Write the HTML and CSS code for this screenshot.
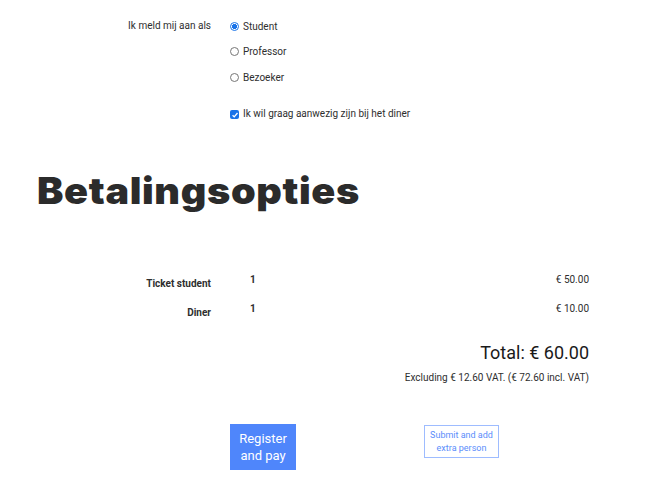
FILE: index.html
```html
<!DOCTYPE html>
<html lang="nl">
<head>
<meta charset="utf-8">
<link rel="stylesheet" href="styles.css">
</head>
<body>
<div class="page">
  <div class="form-row">
    <div class="label">Ik meld mij aan als</div>
    <div class="options">
      <label class="opt"><span class="radio checked"></span>Student</label>
      <label class="opt"><span class="radio"></span>Professor</label>
      <label class="opt"><span class="radio"></span>Bezoeker</label>
      <label class="opt check-opt"><span class="checkbox"><svg viewBox="0 0 8 8" width="8" height="8"><path d="M1.6 4.3 L3.2 5.9 L6.5 2" fill="none" stroke="#fff" stroke-width="1.3"/></svg></span>Ik wil graag aanwezig zijn bij het diner</label>
    </div>
  </div>

  <h1 class="title">Betalingsopties</h1>

  <div class="items">
    <div class="item">
      <div class="item-name">Ticket student</div>
      <div class="item-qty">1</div>
      <div class="item-price">€ 50.00</div>
    </div>
    <div class="item">
      <div class="item-name">Diner</div>
      <div class="item-qty">1</div>
      <div class="item-price">€ 10.00</div>
    </div>
  </div>

  <div class="summary">
    <div class="total">Total: € 60.00</div>
    <div class="vat">Excluding € 12.60 VAT. (€ 72.60 incl. VAT)</div>
  </div>

  <div class="actions">
    <button class="btn-primary">Register<br>and pay</button>
    <button class="btn-secondary">Submit and add<br>extra person</button>
  </div>
</div>
</body>
</html>
```
FILE: styles.css
```css
* { box-sizing: border-box; }
html, body { margin: 0; padding: 0; background: #fff; }
body {
  font-family: Roboto, "Liberation Sans", Arial, sans-serif;
  font-size: 10px;
  color: #2e2e2e;
}
.page {
  width: 670px;
  padding: 19px 81px 0 37px;
}
.form-row {
  display: grid;
  grid-template-columns: 174px 1fr;
  column-gap: 19px;
}
.label {
  text-align: right;
  line-height: 14px;
}
.options {
  display: flex;
  flex-direction: column;
}
.opt {
  display: flex;
  align-items: center;
  height: 14px;
  margin-bottom: 11.5px;
  gap: 4px;
}
.check-opt {
  margin-top: 10.5px;
  margin-bottom: 0;
}
.radio {
  width: 9px;
  height: 9px;
  border: 1px solid #767676;
  border-radius: 50%;
  display: inline-block;
  flex: none;
}
.radio.checked {
  border-color: #1a73e8;
  background: radial-gradient(circle, #1a73e8 0 2.3px, #fff 2.6px);
}
.checkbox {
  width: 9px;
  height: 9px;
  background: #1a73e8;
  border-radius: 2px;
  margin-top: 3px;
  display: inline-flex;
  align-items: center;
  justify-content: center;
  flex: none;
}
.checkbox svg { display: block; }
.title {
  font-family: Inter, "DejaVu Sans", sans-serif;
  font-weight: 900;
  font-size: 37px;
  letter-spacing: 0.6px;
  line-height: 36px;
  margin: 53px 0 0 0;
  color: #2b2b2b;
  transform: scaleX(1.07);
  transform-origin: left center;
}
.items {
  margin-top: 64px;
}
.item {
  display: grid;
  grid-template-columns: 174px auto 1fr;
  column-gap: 39px;
  height: 29px;
}
.item-name {
  text-align: right;
  font-weight: 700;
  padding-top: 4px;
  line-height: 14px;
}
.item-qty {
  font-weight: 700;
  line-height: 14px;
}
.item-price {
  text-align: right;
  line-height: 14px;
}
.summary {
  text-align: right;
  margin-top: 10px;
}
.total {
  font-size: 18px;
  font-weight: 400;
  line-height: 24px;
  color: #1a1a1a;
}
.vat {
  font-size: 10px;
  line-height: 14px;
  margin-top: 6px;
}
.actions {
  display: flex;
  align-items: flex-start;
  margin-top: 39px;
  padding-left: 193px;
}
.btn-primary {
  font-family: Roboto, sans-serif;
  background: #4f86fb;
  color: #fff;
  border: 1px solid #4f86fb;
  font-size: 13px;
  line-height: 17px;
  width: 66px;
  height: 46px;
  padding: 0;
}
.btn-secondary {
  font-family: Roboto, sans-serif;
  background: #fff;
  color: #5b8dfb;
  border: 1px solid #9ebcff;
  font-size: 9px;
  line-height: 13px;
  width: 75px;
  height: 33px;
  padding: 0;
  margin-left: 128px;
  margin-top: 1px;
}
```
